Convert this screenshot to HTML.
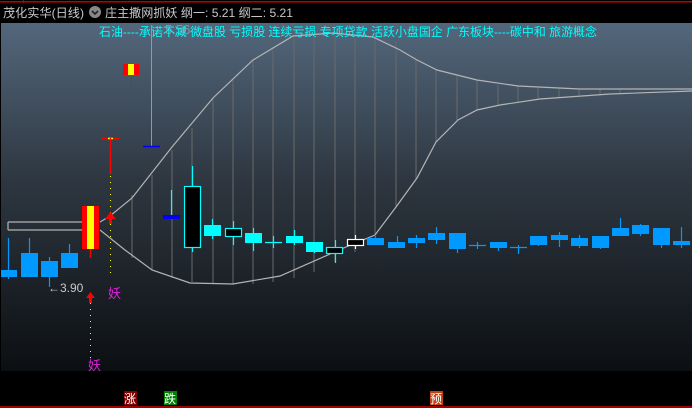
<!DOCTYPE html>
<html><head><meta charset="utf-8"><style>
html,body{margin:0;padding:0;background:#000;width:692px;height:408px;overflow:hidden}
svg{display:block}
text{font-family:"Liberation Sans","Noto Sans CJK SC",sans-serif}
</style></head><body>
<svg width="692" height="408" viewBox="0 0 692 408" xmlns="http://www.w3.org/2000/svg">
<defs>
<linearGradient id="bg" x1="0" y1="0" x2="0" y2="1">
<stop offset="0" stop-color="#53677c"/>
<stop offset="0.45" stop-color="#2e3741"/>
<stop offset="1" stop-color="#0c0f12"/>
</linearGradient>
</defs>
<rect x="0" y="0" width="692" height="408" fill="#000"/>
<rect x="0" y="1" width="692" height="1.5" fill="#c00000"/>
<rect x="23" y="0" width="1" height="3" fill="#c00000"/>
<rect x="1" y="23" width="691" height="348" fill="url(#bg)"/>
<text x="3" y="17" font-size="12" fill="#c8c8c8" textLength="81" lengthAdjust="spacingAndGlyphs">茂化实华(日线)</text>
<circle cx="95" cy="12" r="6" fill="#888"/>
<path d="M92 11 L95 14 L98 11" stroke="#222" stroke-width="1.6" fill="none"/>
<text x="105" y="17" font-size="12" fill="#c8c8c8" textLength="188" lengthAdjust="spacingAndGlyphs">庄主撒网抓妖  纲一: 5.21  纲二: 5.21</text>

<g stroke="#6a6a6a" stroke-width="1">
<path d="M132 195V258 M152 175V270 M172 150V278 M192 128V282 M213 98V284 M233 80V284 M253 60V284 M273 47V282 M294 38V278 M314 35V272 M335 33V262 M355 33V252 M375 35V234 M396 42V207 M416 60V180 M436 70V142 M457 76V120 M477 80V110 M498 85V105 M518 86V102 M538 88V99 M559 88V97 M579 89V95 M600 89V94 M620 89V93"/>
</g>
<g stroke="#b4b4b4" stroke-width="1.2" fill="none">
<path d="M100 222 L110 216 L132 198 L172 147 L213 98 L253 60 L293 36 L333 33 L373 37 L400 50 L417 60 L437 70 L477 80 L518 86 L580 89 L692 89"/>
<path d="M100 230 L125 250 L152 270 L190 283 L233 284 L280 276 L346 247 L375 235 L396 207 L417 178 L436 142 L458 120 L477 110 L500 105 L540 99 L610 94 L692 91"/>
<path d="M8 222 H82 M8 230 H82 M8 222 V230"/>
</g>
<text x="165" y="34" font-size="13" fill="#8a96a4">5.56</text>
<text x="99" y="36" font-size="12" fill="#00ffff" textLength="498" lengthAdjust="spacingAndGlyphs">石油----承诺不减 微盘股 亏损股 连续亏损 专项贷款 活跃小盘国企 广东板块----碳中和 旅游概念</text>

<g fill="#0099ff" stroke="#0099ff">
<path d="M8.5 238V279 M29.5 238V277 M49.5 257V287 M69.5 244V262" stroke-width="1.2" fill="none"/>
<rect x="1" y="270" width="16" height="7" stroke="none"/>
<rect x="21" y="253" width="17" height="24" stroke="none"/>
<rect x="41" y="261" width="17" height="16" stroke="none"/>
<rect x="61" y="253" width="17" height="15" stroke="none"/>
</g>
<text x="48" y="292" font-size="12" fill="#c8c8c8">←3.90</text>
<path d="M90.5 249V258" stroke="#f00" stroke-width="1.5"/>
<rect x="82" y="206" width="17" height="43" fill="#f00"/>
<rect x="87" y="206" width="7" height="43" fill="#ff0"/>
<path d="M90.5 303V360" stroke="#ff0" stroke-width="1" stroke-dasharray="1 5"/>
<path d="M90.5 292 L86 298 H89 V303 H92 V298 H95 Z" fill="#f00"/>
<text x="88" y="370" font-size="13" fill="#e020e0">妖</text>
<path d="M102 138.5H119" stroke="#f00" stroke-width="1.5"/>
<path d="M108 138.5H113" stroke="#ff0" stroke-width="1.5"/>
<path d="M110.5 138V174" stroke="#f00" stroke-width="1.5"/>
<path d="M110.5 176V278" stroke="#ff0" stroke-width="1" stroke-dasharray="1 5"/>
<path d="M110.5 212 L105 219 H109 V224 H112 V219 H116 Z" fill="#f00"/>
<text x="108" y="298" font-size="13" fill="#e020e0">妖</text>
<rect x="123" y="64" width="16" height="11" fill="#f00"/>
<rect x="128" y="64" width="6" height="11" fill="#ff0"/>
<path d="M131.5 75V86" stroke="#f00" stroke-width="1"/>
<path d="M151.5 25V146" stroke="#c89040" stroke-width="1"/>
<path d="M143 146.5H160" stroke="#00f" stroke-width="1.5"/>
<path d="M171.5 190V215" stroke="#0ff" stroke-width="1.2"/>
<rect x="163" y="215" width="17" height="4" fill="#0000ff"/>
<g stroke="#0ff" stroke-width="1.2">
<path d="M192.5 166V252 M212.5 219V239 M233.5 221V245 M253.5 228V251 M273.5 236V248 M294.5 230V245 M314.5 242V253 M335.5 240V263" fill="none"/>
<rect x="184.5" y="186.5" width="16" height="61" fill="#000"/>
<rect x="204" y="225" width="17" height="11" fill="#0ff" stroke="none"/>
<rect x="225.5" y="228.5" width="16" height="8" fill="#000"/>
<rect x="245" y="233" width="17" height="10" fill="#0ff" stroke="none"/>
<path d="M265 242.5H282" fill="none"/>
<rect x="286" y="236" width="17" height="7" fill="#0ff" stroke="none"/>
<rect x="306" y="242" width="17" height="10" fill="#0ff" stroke="none"/>
<rect x="326.5" y="247.5" width="16" height="6" fill="#000"/>
</g>
<g stroke="#fff" stroke-width="1.2"><path d="M355.5 235V249" fill="none"/><rect x="347.5" y="239.5" width="16" height="6" fill="#000"/></g>
<g stroke="#0099ff" stroke-width="1.2" fill="none">
<path d="M375.5 236V245 M397.5 236V248 M416.5 235V248 M436.5 227V244 M457.5 233V253 M477.5 242V249 M498.5 242V251 M518.5 245V254 M538.5 236V246 M559.5 232V247 M579.5 235V248 M600.5 236V249 M620.5 218V236 M640.5 224V236 M661.5 228V248 M681.5 227V248 M469 245.5H486 M510 247.5H527"/>
</g>
<g fill="#0099ff">
<rect x="367" y="238" width="17" height="7"/>
<rect x="388" y="242" width="17" height="6"/>
<rect x="408" y="238" width="17" height="5"/>
<rect x="428" y="233" width="17" height="7"/>
<rect x="449" y="233" width="17" height="16"/>
<rect x="490" y="242" width="17" height="6"/>
<rect x="530" y="236" width="17" height="9"/>
<rect x="551" y="235" width="17" height="5"/>
<rect x="571" y="238" width="17" height="8"/>
<rect x="592" y="236" width="17" height="12"/>
<rect x="612" y="228" width="17" height="8"/>
<rect x="632" y="225" width="17" height="9"/>
<rect x="653" y="228" width="17" height="17"/>
<rect x="673" y="241" width="17" height="4"/>
</g>
<rect x="124" y="391" width="13" height="14" fill="#800000"/>
<text x="124" y="403" font-size="12" fill="#fff">涨</text>
<rect x="164" y="391" width="13" height="14" fill="#008000"/>
<text x="164" y="403" font-size="12" fill="#fff">跌</text>
<rect x="430" y="391" width="13" height="14" fill="#c04010"/>
<text x="430" y="403" font-size="12" fill="#fff">预</text>
<rect x="0" y="406" width="692" height="2" fill="#a00000"/>
</svg>
</body></html>
